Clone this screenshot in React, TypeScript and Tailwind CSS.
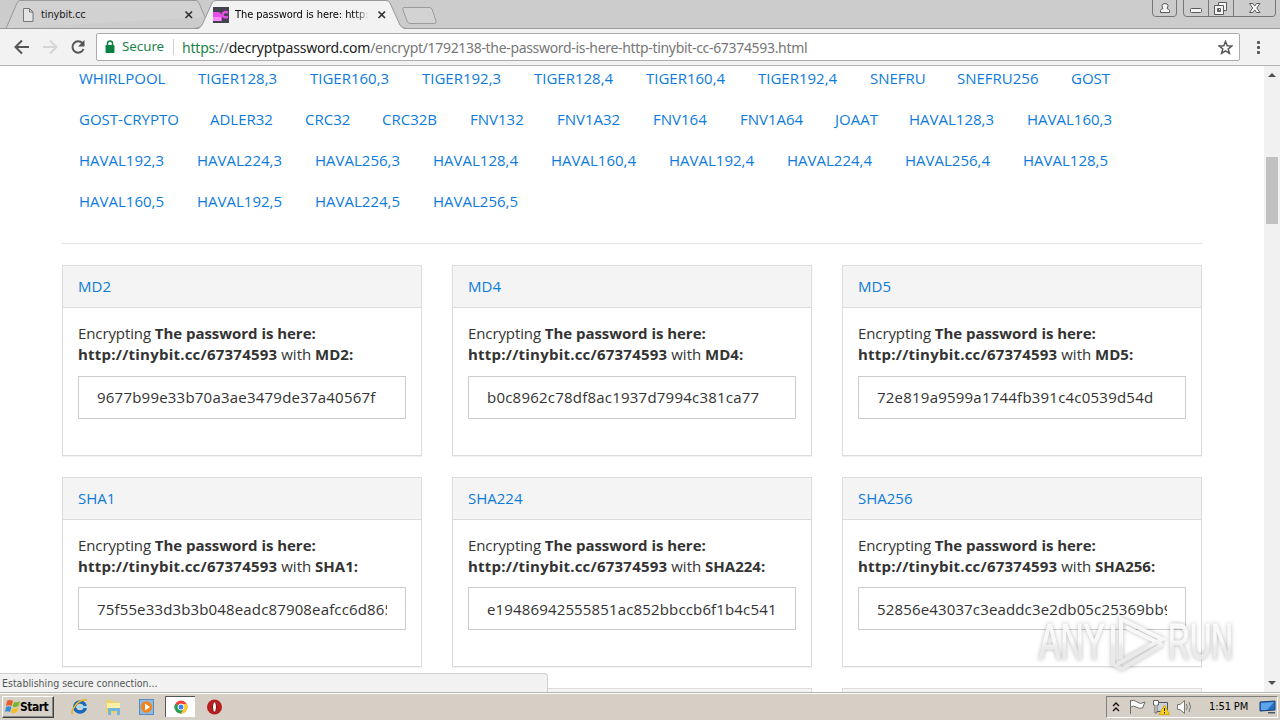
type Item = [label: string, width: number]

// Each entry keeps the advance to the next link in its row
const LINK_ROWS: Item[][] = [
  [['WHIRLPOOL', 119], ['TIGER128,3', 112], ['TIGER160,3', 112], ['TIGER192,3', 112], ['TIGER128,4', 112], ['TIGER160,4', 112], ['TIGER192,4', 112], ['SNEFRU', 87], ['SNEFRU256', 114], ['GOST', 60]],
  [['GOST-CRYPTO', 131], ['ADLER32', 95], ['CRC32', 77], ['CRC32B', 88], ['FNV132', 87], ['FNV1A32', 96], ['FNV164', 87], ['FNV1A64', 95], ['JOAAT', 74], ['HAVAL128,3', 118], ['HAVAL160,3', 100]],
  [['HAVAL192,3', 118], ['HAVAL224,3', 118], ['HAVAL256,3', 118], ['HAVAL128,4', 118], ['HAVAL160,4', 118], ['HAVAL192,4', 118], ['HAVAL224,4', 118], ['HAVAL256,4', 118], ['HAVAL128,5', 118]],
  [['HAVAL160,5', 118], ['HAVAL192,5', 118], ['HAVAL224,5', 118], ['HAVAL256,5', 118]],
]

const HASHES = [
  { name: 'MD2', value: '9677b99e33b70a3ae3479de37a40567f' },
  { name: 'MD4', value: 'b0c8962c78df8ac1937d7994c381ca77' },
  { name: 'MD5', value: '72e819a9599a1744fb391c4c0539d54d' },
  { name: 'SHA1', value: '75f55e33d3b3b048eadc87908eafcc6d865' },
  { name: 'SHA224', value: 'e19486942555851ac852bbccb6f1b4c541' },
  { name: 'SHA256', value: '52856e43037c3eaddc3e2db05c25369bb9' },
]

function TabStrip() {
  return (
    <div className="relative h-[29px] shrink-0 bg-[#cccccc]">
      <svg className="absolute inset-0" width="1280" height="29" fill="none">
        <path d="M6 28.5 17 3Q18 .5 20 .5H196Q198 .5 199 3L205 17" fill="#d1d1d1" stroke="#999" />
        <path d="M0 28.5H1280" stroke="#999" />
        <path d="M198 29Q201 28 202 26L212 3Q213 .5 216 .5H386Q389 .5 390 3L400 26Q401 28 405 29Z" fill="#f2f2f2" />
        <path d="M194 28.5Q200 28.5 202 25L212 3Q213 .5 216 .5H386Q389 .5 390 3L400 25Q402 28.5 407 28.5" stroke="#999" />
        <path d="M404 7.5H429Q431 7.5 432 9L436 21Q437 23.5 434 23.5H410Q408 23.5 407 21L403 10Q402 7.5 404 7.5Z" fill="#d3d3d3" stroke="#9b9b9b" />
        <path d="M23.5 8.5H29.5L33 12V21.5H23.5ZM29.5 8.5V12H33" fill="#e4e4e4" stroke="#777" />
        <path d="m185.500 11.500 6.500 6.500m0-6.500-6.500 6.500M378.500 11.500l6.500 6.500m0-6.500-6.500 6.500" stroke="#333" strokeWidth="1.700" />
        <rect x="213" y="7" width="16" height="16" fill="#444250" />
        <path d="M213 12H217Q222 12 222 17V21H213Z" fill="#e84ee9" />
        <path d="M213 17H221V21H213Z" fill="#fa8af8" />
        <path d="M228 12.500Q223 11 222.500 15Q223 18 228 17" stroke="#e250df" strokeWidth="2.500" />
      </svg>
      <span className="absolute left-[41px] top-2 text-[11px] leading-[14px] tracking-[-0.1px] text-[#181818]">tinybit.cc</span>
      <span className="absolute left-[235px] top-2 w-[133px] overflow-hidden bg-linear-to-r from-black from-88% to-[#ddd] bg-clip-text text-[11px] leading-[14px] tracking-[-0.06px] whitespace-nowrap text-transparent">
        The password is here: http:
      </span>
      <svg className="absolute top-0 left-[1150px]" width="130" height="20" fill="none" stroke="#777">
        <path d="M2.500 0V13Q2.500 16.500 5.500 16.500H24Q26.500 16.500 26.500 13V0M33.500 0V13Q33.500 16.500 36.500 16.500H123Q125.500 16.500 125.500 13V0M58.500 0V16M83.500 0V16" />
        <g stroke="#5a5a5a" fill="#f4f4f4">
          <path d="M10.500 12.500V10.500Q11 9 13 8.500Q12 7 12 5.500Q12.500 3.500 15 3.500T18 5.500Q18 7 17 8.500Q19 9 19.500 10.500V12.500Z" />
          <rect x="40.500" y="8.500" width="11" height="4" rx="1" />
          <path d="M68.500 2.500H76.500V10.500H68.500Z" />
          <path d="M64.500 5.500H73.500V14.500H64.500ZM67.500 8.500V11.500H70.500V8.500Z" />
          <path d="M99.500 3.500H103L104.700 6L106.500 3.500H110L106.800 8L110 12.500H106.500L104.700 10L103 12.500H99.500L102.700 8Z" />
        </g>
      </svg>
    </div>
  )
}

function Toolbar() {
  return (
    <div className="flex h-[37px] shrink-0 items-center border-b border-[#b4b4b4] bg-[#f2f2f2]">
      <svg width="96" height="36" fill="none" strokeWidth="2">
        <path d="M29 18H16M22 11.500 15.500 18 22 24.500" stroke="#555" />
        <path d="M43 18H56M50 11.500 56.500 18 50 24.500" stroke="#d5d5d5" />
        <path d="M82.500 14.200A5.700 5.700 0 1 0 83.500 20" stroke="#555" />
        <path d="M84.500 11V17.500H78Z" fill="#555" />
      </svg>
      <div className="flex h-7 w-[1144px] items-center rounded-[2px] border border-[#adadad] bg-white">
        <svg className="ml-2" width="10" height="14" fill="none">
          <rect x=".5" y="5" width="9" height="8" rx="1" fill="#0b8043" />
          <path d="M2.500 6V3.500Q2.500 1 5 1T7.500 3.500V6" stroke="#0b8043" strokeWidth="1.500" />
        </svg>
        <span className="ml-[7px] w-[43px] font-['Noto_Sans'] text-[13.3px] whitespace-nowrap text-[#1b8449]">Secure</span>
        <span className="ml-2 h-4 w-px bg-[#ccc]" />
        <span className="ml-2 flex-1 font-['Noto_Sans'] text-[14px] tracking-[-0.32px] whitespace-nowrap text-[#777]">
          <span className="tracking-[-0.2px]"><span className="text-[#1b8449]">https</span>://<span className="text-[#222]">decryptpassword.com</span></span>/encrypt/1792138-the-password-is-here-http-tinybit-cc-67374593.html
        </span>
        <svg className="mr-[6px]" width="15" height="15" fill="none" stroke="#555" strokeWidth="1.500">
          <path d="m7.500 1.500 1.700 4.200 4.500.3-3.500 2.900 1.200 4.400-3.900-2.500-3.900 2.500 1.200-4.400L1.300 6l4.500-.3Z" />
        </svg>
      </div>
      <svg width="40" height="36" fill="#555">
        <rect x="17" y="12" width="3" height="3" rx="1" />
        <rect x="17" y="17" width="3" height="3" rx="1" />
        <rect x="17" y="22" width="3" height="3" rx="1" />
      </svg>
    </div>
  )
}

function HashCard({ name, value }: { name: string; value: string }) {
  return (
    <section className="border border-[#dcdcdc] bg-white shadow-[0_1px_1px_rgba(0,0,0,0.05)]">
      <h3 className="h-[42px] border-b border-[#dcdcdc] bg-[#f4f4f4] pl-[15px] leading-10 text-[#0d7bdc]">{name}</h3>
      <div className="px-[15px] pt-[15px]">
        <p className="leading-[21px] whitespace-nowrap">
          <span className="tracking-[-0.1px]">Encrypting </span><b className="tracking-[-0.04px]">The password is here:</b>
          <br />
          <b className="tracking-[0.22px]">http://tinybit.cc/67374593</b> with <b>{name}:</b>
        </p>
        <div className="mt-[11px] h-[43px] border border-[#ccc] px-[18px] in-[.short]:mt-[10px]">
          <div className="overflow-hidden leading-[41px] tracking-[0.22px] whitespace-nowrap in-[.short]:pt-px in-[.short]:tracking-[0.15px]">{value}</div>
        </div>
      </div>
    </section>
  )
}

function Page() {
  return (
    <div className="relative flex h-[626px] shrink-0 overflow-hidden bg-white font-['Open_Sans'] text-[15px] text-[#333]">
      <main className="w-[1264px] pl-[62px]">
        <nav className="-mt-2 pl-[17px] text-[#0d7bdc]">
          {LINK_ROWS.map((row, i) => (
            <div key={i} className="flex h-[41px] items-center">
              {row.map(([label, width]) => (
                <a key={label} className="shrink-0 whitespace-nowrap" style={{ width }}>{label}</a>
              ))}
            </div>
          ))}
        </nav>
        <hr className="mt-[21px] w-[1140px] border-[#e2e2e2]" />
        <div className="mt-[21px] grid h-[191px] w-[1140px] grid-cols-3 gap-x-[30px]">
          {HASHES.slice(0, 3).map((hash) => <HashCard key={hash.name} {...hash} />)}
        </div>
        <div className="short mt-[21px] grid h-[190px] w-[1140px] grid-cols-3 gap-x-[30px]">
          {HASHES.slice(3).map((hash) => <HashCard key={hash.name} {...hash} />)}
        </div>
        <div className="mt-[21px] grid w-[1140px] grid-cols-3 gap-x-[30px]">
          {[0, 1, 2].map((n) => (
            <div key={n} className="h-10 border border-[#dcdcdc] bg-[#f4f4f4]" />
          ))}
        </div>
      </main>
      <div className="flex w-4 flex-col items-center bg-[#f1f1f1]">
        <svg className="mt-[6px]" width="8" height="5"><path d="M0 5 4 1 8 5Z" fill="#505050" /></svg>
        <div className="mt-20 h-[67px] w-3 bg-[#c1c1c1]" />
        <svg className="mt-auto mb-[6px]" width="8" height="5"><path d="M0 0 4 4 8 0Z" fill="#505050" /></svg>
      </div>
      <div className="absolute bottom-0 left-0 h-[19px] w-[548px] rounded-tr-[4px] border-t border-r border-[#d0d0d0] bg-[#f2f2f2] pl-[2px] font-['DejaVu_Sans_Condensed'] text-[10.5px] leading-[18px] text-[#555]">
        Establishing secure connection...
      </div>
      <Watermark />
    </div>
  )
}

function Watermark() {
  return (
    <svg className="absolute top-[541px] left-[1030px] drop-shadow-[0_0_2px_rgba(0,0,0,0.3)]" width="210" height="72" fill="none">
      <defs>
        <linearGradient id="fade" gradientUnits="userSpaceOnUse" x1="0" y1="8" x2="0" y2="64">
          <stop offset=".45" stopColor="#fff" stopOpacity=".85" />
          <stop offset=".6" stopColor="#ececec" stopOpacity=".9" />
        </linearGradient>
      </defs>
      <g fill="url(#fade)" stroke="url(#fade)" fontFamily="Liberation Sans" fontSize="50">
        <text x="9" y="52" textLength="66" lengthAdjust="spacingAndGlyphs">ANY</text>
        <text x="138" y="52" textLength="65" lengthAdjust="spacingAndGlyphs">RUN</text>
      </g>
      <path d="M83 18V57L92 62 133 37" stroke="url(#fade)" strokeWidth="4" />
      <path d="M91 52V12L132 32 87 57M96 20 131 37" stroke="url(#fade)" strokeWidth="4" />
    </svg>
  )
}

function Taskbar() {
  return (
    <div className="flex h-7 shrink-0 items-center border-t border-[#b5b5ae] bg-[#d6cfc6] shadow-[inset_0_1px_0_#fff]">
      <button className="ml-[2px] flex h-[22px] w-[52px] items-center border border-t-white border-r-[#404040] border-b-[#404040] border-l-white pl-px font-['DejaVu_Sans_Condensed'] text-[12px] font-bold tracking-[-0.5px] text-black shadow-[inset_-1px_-1px_#888]">
        <svg width="16" height="16" className="shrink-0">
          <path d="M3 2Q6 0 9 2L7.500 7Q5 5.500 2 7Z" fill="#e65d29" />
          <path d="M10 3Q13 4 16 2L14.500 7Q11 9 8.500 7.500Z" fill="#78b72b" />
          <path d="M2 8Q5 6.500 7.500 8L6 13Q3 11.500 1 13Z" fill="#358fd0" />
          <path d="M8.500 9Q11 10 14.500 8.500L13 13Q10 15 7 13.500Z" fill="#f7bd27" />
        </svg>
        <span>Start</span>
      </button>
      <svg width="180" height="26" className="-mt-px ml-4" fill="none">
        <ellipse cx="10" cy="14" rx="5.300" ry="5" stroke="#1669bd" strokeWidth="3.500" />
        <path d="M6 14H17" stroke="#9bd9f4" strokeWidth="2" />
        <path d="M3 21Q0 20 5 13T17 7" stroke="#e5b528" strokeWidth="1.500" />
        <path d="M36 7H42L44 9H50V20H36Z" fill="#edd16f" />
        <path d="M37 10H50V15H37Z" fill="#fff0a9" />
        <path d="M38 22V15H50V22H47V18H41V22Z" fill="#72b7db" />
        <rect x="69.500" y="6.500" width="14" height="15" fill="#8fbae0" stroke="#568dc0" />
        <circle cx="76.500" cy="14" r="5.700" fill="#f3841d" />
        <path d="m75 10.500 5 3.500-5 3.500Z" fill="#fff" />
        <path d="M95.500 3.500H125V24H95.500Z" fill="#fff" />
        <path d="M95.500 24V3.500H125" stroke="#555" />
        <circle cx="111" cy="14" r="6.500" fill="#ef4438" />
        <path d="M105.400 10.700A6.500 6.500 0 0 0 111 20.500L114 15.500 111 14Z" fill="#23a455" />
        <path d="M111 20.500A6.500 6.500 0 0 0 116.700 11H111L114 15.500Z" fill="#fdcb27" />
        <circle cx="111" cy="14" r="3" fill="#427fec" stroke="#fff" />
        <circle cx="144.500" cy="14" r="7.500" fill="#b81d20" />
        <ellipse cx="144.500" cy="14" rx="2" ry="5" fill="#fff" stroke="#7a0b0e" />
      </svg>
      <div className="mr-[2px] ml-auto flex h-[22px] w-[172px] shrink-0 items-center border border-t-[#808080] border-r-white border-b-white border-l-[#808080] text-[11px] text-black">
        <svg width="94" height="20" fill="none" className="shrink-0">
          <path d="m6 9 3-3 3 3M6 14l3-3 3 3" stroke="#111" strokeWidth="1.400" />
          <path d="M23.500 3V17M23.500 4Q27 2 30 5T38 5L35.500 11Q32 12 29 10T24 10" fill="#fff" stroke="#6c6c6c" />
          <path d="M49.500 5.500H60.500V14.500H49.500Z" fill="#c9d2dc" stroke="#555" />
          <path d="M46.500 3.500H51.500V8H50V16H48V8H46.500Z" fill="#fff" stroke="#666" />
          <path d="m57.500 8 5 9.500H52Z" fill="#fbd22a" stroke="#d5a900" />
          <path d="M57.500 11V14M57.500 15V16.500" stroke="#222" />
          <path d="M70.500 7.500H73L77.500 3.500V16.500L73 12.500H70.500Z" fill="#fff" stroke="#777" />
          <path d="M79.500 7Q81 10 79.500 13M82 5Q85 10 82 15" stroke="#777" />
        </svg>
        <span className="mt-[2px] ml-[8px] w-[42px] shrink-0 text-[11px] tracking-[-0.1px] whitespace-nowrap">1:51 PM</span>
        <svg width="18" height="16" className="ml-[8px] shrink-0">
          <path d="M1 3 16 2V11L1 12Z" fill="#276ec5" stroke="#164078" />
          <path d="M2 4 15 3 8 11H2Z" fill="#5fa5eb" />
          <path d="M9 13H16V14.500H9Z" fill="#4b5967" />
        </svg>
      </div>
    </div>
  )
}

export default function App() {
  return (
    <div className="flex h-[720px] w-[1280px] flex-col overflow-hidden bg-white font-['DejaVu_Sans_Condensed',sans-serif]">
      <TabStrip />
      <Toolbar />
      <Page />
      <Taskbar />
    </div>
  )
}
